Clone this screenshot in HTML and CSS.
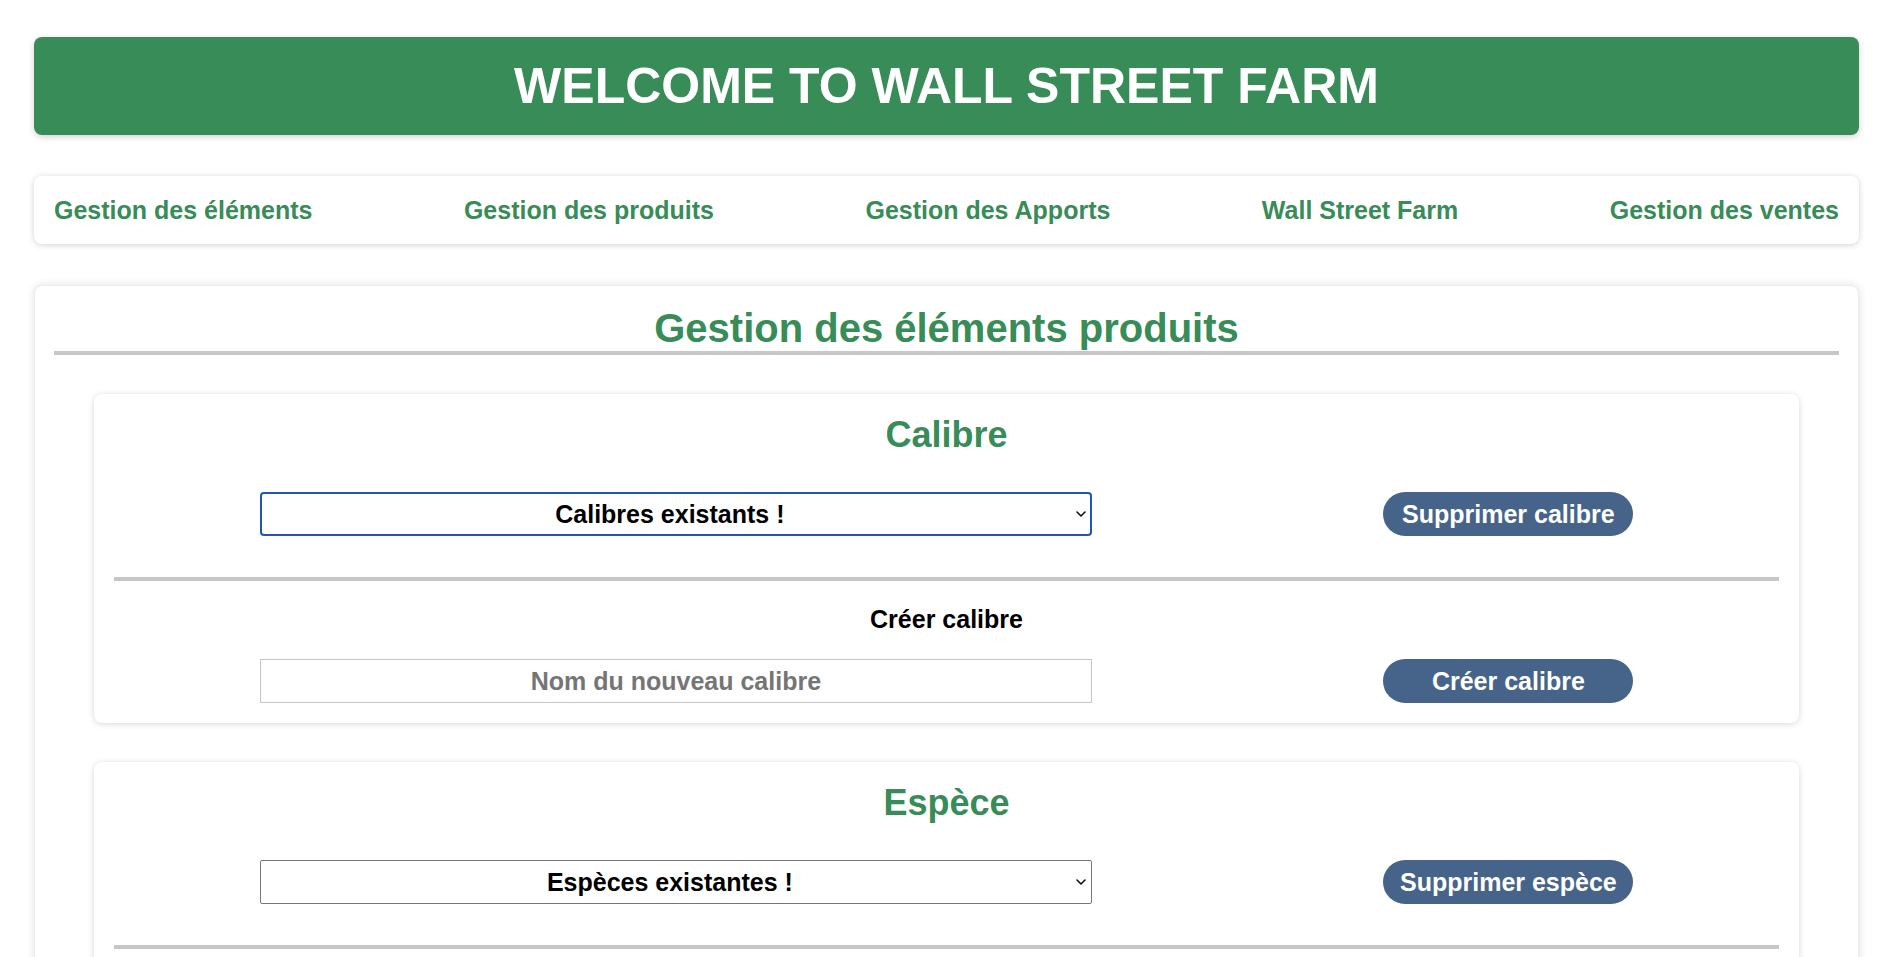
FILE: index.html
```html
<!DOCTYPE html>
<html lang="fr">
<head>
<meta charset="utf-8">
<title>Wall Street Farm</title>
<link rel="stylesheet" href="styles.css">
</head>
<body>
<div class="page">
  <header class="banner">
    <h1 class="banner-title">WELCOME TO WALL STREET FARM</h1>
  </header>

  <nav class="menu">
    <a class="menu-link" href="#">Gestion des éléments</a>
    <a class="menu-link" href="#">Gestion des produits</a>
    <a class="menu-link" href="#">Gestion des Apports</a>
    <a class="menu-link" href="#">Wall Street Farm</a>
    <a class="menu-link" href="#">Gestion des ventes</a>
  </nav>

  <main class="panel">
    <h2 class="panel-title">Gestion des éléments produits</h2>

    <section class="card">
      <h3 class="card-title">Calibre</h3>
      <div class="row">
        <div class="select-wrap is-focused">
          <select class="select">
            <option>Calibres existants !</option>
          </select>
          <svg class="chevron" width="10" height="6" viewBox="0 0 10 6"><path d="M1 1 L5 5 L9 1" fill="none" stroke="#111" stroke-width="1.6" stroke-linecap="round" stroke-linejoin="round"/></svg>
        </div>
        <button class="btn">Supprimer calibre</button>
      </div>
      <hr class="sep">
      <p class="label">Créer calibre</p>
      <div class="row">
        <input class="input" type="text" placeholder="Nom du nouveau calibre">
        <button class="btn">Créer calibre</button>
      </div>
    </section>

    <section class="card">
      <h3 class="card-title">Espèce</h3>
      <div class="row">
        <div class="select-wrap">
          <select class="select">
            <option>Espèces existantes !</option>
          </select>
          <svg class="chevron" width="10" height="6" viewBox="0 0 10 6"><path d="M1 1 L5 5 L9 1" fill="none" stroke="#111" stroke-width="1.6" stroke-linecap="round" stroke-linejoin="round"/></svg>
        </div>
        <button class="btn">Supprimer espèce</button>
      </div>
      <hr class="sep">
      <p class="label">Créer espèce</p>
      <div class="row">
        <input class="input" type="text" placeholder="Nom de la nouvelle espèce">
        <button class="btn">Créer espèce</button>
      </div>
    </section>
  </main>
</div>
</body>
</html>
```

FILE: styles.css
```css
* {
  box-sizing: border-box;
}

html, body {
  margin: 0;
  background: #ffffff;
}

body {
  font-family: "Liberation Sans", Arial, Helvetica, sans-serif;
  font-weight: bold;
  color: #000;
}

.page {
  padding: 37px 37px 40px 34px;
}

.banner {
  background: #378c57;
  border-radius: 8px;
  box-shadow: 0 2px 6px rgba(0, 0, 0, 0.18);
  padding: 21px 0;
}

.banner-title {
  margin: 0;
  color: #ffffff;
  text-align: center;
  font-size: 50px;
  line-height: 56px;
  font-weight: bold;
}

.menu {
  margin-top: 41px;
  background: #fff;
  border-radius: 8px;
  box-shadow: 0 1px 6px rgba(0, 0, 0, 0.18);
  display: flex;
  justify-content: space-between;
  align-items: center;
  padding: 19px 20px;
}

.menu-link {
  color: #378c57;
  text-decoration: none;
  font-size: 25px;
  line-height: 30px;
}

.panel {
  margin-top: 41px;
  background: #fff;
  border-radius: 8px;
  border: 1px solid #ececec;
  box-shadow: 0 0 8px rgba(0, 0, 0, 0.12);
  padding: 20px 19px 40px;
}

.panel-title {
  margin: 0;
  text-align: center;
  color: #378c57;
  font-size: 40px;
  line-height: 45px;
  border-bottom: 4px solid #c6c6c6;
}

.card {
  margin: 39px 40px 0;
  background: #fff;
  border-radius: 8px;
  box-shadow: 0 1px 6px rgba(0, 0, 0, 0.16);
  padding: 20px;
}

.card + .card {
  margin-top: 39px;
}

.card-title {
  margin: 0;
  text-align: center;
  color: #378c57;
  font-size: 36px;
  line-height: 41px;
}

.row {
  display: flex;
  justify-content: space-around;
  align-items: center;
  margin-top: 37px;
}

.label + .row {
  margin-top: 25px;
}

.select-wrap {
  position: relative;
  width: 50%;
  height: 44px;
}

.select {
  -webkit-appearance: none;
  appearance: none;
  width: 100%;
  height: 100%;
  margin: 0;
  background: #fff;
  border: 1px solid #767676;
  border-radius: 2px;
  font-family: inherit;
  font-weight: bold;
  font-size: 25px;
  color: #000;
  text-align: center;
  text-align-last: center;
  padding: 0 32px 0 20px;
  outline: none;
}

.is-focused .select {
  border: 2px solid #1d59ae;
  border-radius: 4px;
}

.chevron {
  position: absolute;
  right: 6px;
  top: 19px;
  pointer-events: none;
}

.input {
  width: 50%;
  height: 44px;
  margin: 0;
  border: 1px solid #c4c4c4;
  border-radius: 0;
  background: #fff;
  font-family: inherit;
  font-weight: bold;
  font-size: 25px;
  color: #000;
  text-align: center;
  padding: 0 10px;
  outline: none;
}

.input::placeholder {
  color: #757575;
  opacity: 1;
}

.btn {
  width: 250px;
  height: 44px;
  border: none;
  border-radius: 22px;
  background: #46648a;
  color: #fff;
  font-family: inherit;
  font-weight: bold;
  font-size: 25px;
  line-height: 44px;
  padding: 0;
  cursor: pointer;
}

.sep {
  margin: 41px 0 0;
  border: none;
  height: 4px;
  background: #c6c6c6;
}

.label {
  margin: 24px 0 0;
  text-align: center;
  font-size: 25px;
  line-height: 29px;
}
```
